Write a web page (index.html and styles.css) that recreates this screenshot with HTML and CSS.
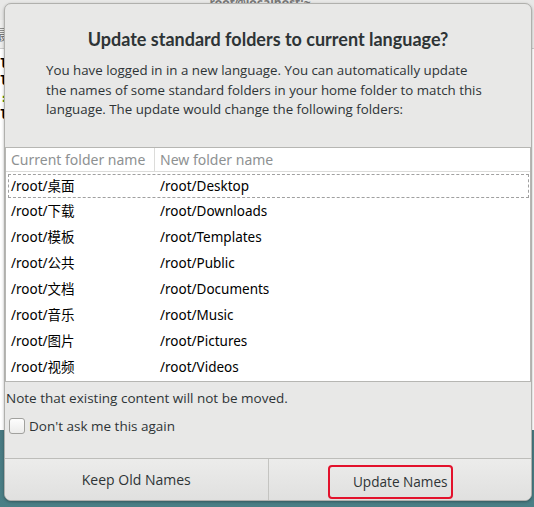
FILE: index.html
```html
<!DOCTYPE html>
<html>
<head>
<meta charset="utf-8">
<link rel="stylesheet" href="styles.css">
</head>
<body>
<div class="desktop">
  <div class="terminal">
    <div class="term-title">root@localhost:~</div>
    <div class="term-menu">最</div>
    <div class="term-body">
      <div>l</div><div>l</div><div class="green">:</div><div>l</div>
    </div>
  </div>
  <div class="dialog">
    <h1 class="title">Update standard folders to current language?</h1>
    <p class="desc">You have logged in in a new language. You can automatically update<br>the names of some standard folders in your home folder to match this<br>language. The update would change the following folders:</p>
    <div class="table">
      <div class="thead">
        <div class="th c1">Current folder name</div>
        <div class="th c2">New folder name</div>
      </div>
      <div class="row focus"><div class="c1">/root/桌面</div><div class="c2">/root/Desktop</div></div>
      <div class="row"><div class="c1">/root/下载</div><div class="c2">/root/Downloads</div></div>
      <div class="row"><div class="c1">/root/模板</div><div class="c2">/root/Templates</div></div>
      <div class="row"><div class="c1">/root/公共</div><div class="c2">/root/Public</div></div>
      <div class="row"><div class="c1">/root/文档</div><div class="c2">/root/Documents</div></div>
      <div class="row"><div class="c1">/root/音乐</div><div class="c2">/root/Music</div></div>
      <div class="row"><div class="c1">/root/图片</div><div class="c2">/root/Pictures</div></div>
      <div class="row"><div class="c1">/root/视频</div><div class="c2">/root/Videos</div></div>
    </div>
    <p class="note">Note that existing content will not be moved.</p>
    <label class="check"><span class="box"></span><span>Don't ask me this again</span></label>
    <div class="buttons">
      <div class="btn">Keep Old Names</div>
      <div class="btn"><span class="mark">Update Names</span></div>
    </div>
  </div>
</div>
</body>
</html>
```
FILE: styles.css
```css
html, body {
  margin: 0;
  padding: 0;
}
body {
  width: 534px;
  height: 507px;
  overflow: hidden;
  font-family: "Open Sans", "Noto Sans CJK SC", sans-serif;
}
.desktop {
  position: relative;
  width: 534px;
  height: 507px;
  background: linear-gradient(#3e5867, #4a7f86);
}
.terminal {
  position: absolute;
  left: -20px;
  top: 0;
  width: 560px;
  height: 430px;
  background: #fff;
}
.term-title {
  height: 20px;
  background: #e8e8e7;
  color: #777;
  font-size: 12px;
  text-align: center;
  line-height: 6px;
  font-weight: bold;
}
.term-menu {
  height: 28px;
  background: #ededec;
  border-bottom: 1px solid #ccc;
  font-size: 14px;
  line-height: 28px;
  padding-left: 14px;
  color: #777;
  font-family: "Noto Sans CJK SC", sans-serif;
}
.term-body {
  padding: 6px 0 0 20px;
  font-family: "DejaVu Sans Mono", monospace;
  font-size: 13px;
  line-height: 17px;
  font-weight: bold;
}
.term-body .green { color: #4e9a06; }
.dialog {
  position: absolute;
  left: 4px;
  top: 3px;
  width: 528px;
  height: 498px;
  box-sizing: border-box;
  background: #e8e8e7;
  border: 1px solid #b0b0ad;
  border-radius: 7px;
  box-shadow: 0 1px 3px rgba(0,0,0,0.3);
  display: flex;
  flex-direction: column;
  color: #2e3436;
  overflow: hidden;
}
.title {
  margin: 23px 0 0;
  font-family: "Lato", sans-serif;
  font-size: 18px;
  font-weight: bold;
  text-align: center;
  line-height: 24px;
}
.desc {
  margin: 10px 0 0 41px;
  width: 480px;
  font-size: 13.3px;
  line-height: 19.7px;
  white-space: nowrap;
}
.table {
  margin: 27px 0 0 0;
  background: #fff;
  border: 1px solid #b6b6b3;
  font-family: "Noto Sans", "Noto Sans CJK SC", sans-serif;
  font-size: 13.5px;
}
.thead {
  display: flex;
  height: 23px;
  border-bottom: 1px solid #dcdcda;
  color: #8e9192;
  align-items: center;
  font-size: 14px;
}
.th {
  height: 23px;
  line-height: 23px;
}
.th.c1 {
  border-right: 1px solid #dcdcda;
}
.c1 {
  width: 149px;
  padding-left: 5px;
  box-sizing: border-box;
  flex: none;
}
.c2 {
  padding-left: 5px;
}
.row {
  display: flex;
  height: 26px;
  line-height: 26px;
  box-sizing: border-box;
  color: #000;
}
.row.focus {
  border: 1px dashed #a0a0a0;
  margin: 2px 1px 0 2px;
  height: 24px;
  line-height: 22px;
}
.row.focus .c1 { padding-left: 2px; width: 146px; }
.row:last-child { height: 27px; }
.note {
  margin: 6px 0 0 1px;
  font-size: 13.5px;
  line-height: 20px;
}
.check {
  display: flex;
  align-items: center;
  margin: 8px 0 0 4px;
  font-size: 13.5px;
  line-height: 20px;
  gap: 4px;
}
.box {
  width: 14px;
  height: 14px;
  border: 1px solid #a1a19e;
  border-radius: 3px;
  background: linear-gradient(#fdfdfd, #ececeb);
}
.buttons {
  margin-top: auto;
  height: 41px;
  border-top: 1px solid #bdbdba;
  display: flex;
  font-size: 14px;
}
.btn {
  flex: 1;
  display: flex;
  align-items: center;
  justify-content: center;
  background: linear-gradient(#ececeb, #e0e0df);
}
.btn + .btn {
  border-left: 1px solid #c4c4c1;
}
.mark {
  border: 2px solid #e3122c;
  border-radius: 4px;
  padding: 5px 3px 5px 23px;
  line-height: 20px;
  margin: 5px 19px 0 0;
  font-size: 13.6px;
}
```
